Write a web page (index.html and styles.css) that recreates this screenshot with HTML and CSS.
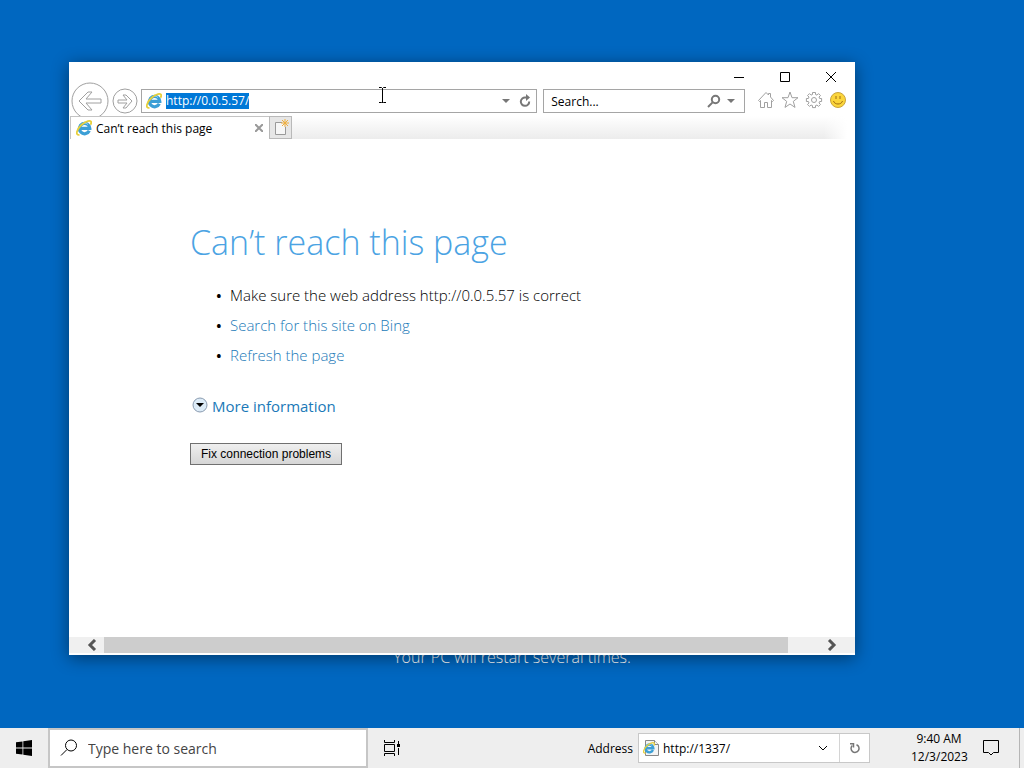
FILE: index.html
```html
<!DOCTYPE html>
<html lang="en">
<head>
    <meta charset="UTF-8">
    <meta name="viewport" content="width=device-width, initial-scale=1.0">
    <title>Can’t reach this page</title>
    <link rel="stylesheet" href="styles.css">
</head>
<body>
    <!-- shared Internet Explorer logo -->
    <svg class="defs" width="0" height="0">
        <symbol id="ie" viewBox="0 0 16 16">
            <path d="M13.300 10.800a5.200 5.200 0 1 1 .5-2.500H5" fill="none" stroke="#3c9fd6" stroke-width="3.200"/>
            <path d="M4.500 6a4.500 4.500 0 0 1 7.500-1.500" fill="none" stroke="#8fd3f4" stroke-width="1"/>
            <path d="M3.500 14.800C-1 15.500.5 9.500 5.300 5S15 0 15.200 2.200c.1.800-.2 1.600-.7 2.500" fill="none" stroke="#e6cf3c" stroke-width="1.800"/>
        </symbol>
    </svg>

    <main class="desktop">
        <p class="setup-text">Your PC will restart several times.</p>

        <section class="window">
            <div class="titlebar">
                <button aria-label="Minimize"><svg width="12" height="12"><path d="M1 6.500h10"/></svg></button>
                <button aria-label="Maximize"><svg width="12" height="12"><path d="M1.500 1.500h9v9h-9z"/></svg></button>
                <button aria-label="Close"><svg width="12" height="12"><path d="M1 1l10 10M11 1L1 11"/></svg></button>
            </div>

            <div class="navbar">
                <button class="back" aria-label="Back">
                    <svg width="38" height="38"><circle cx="19" cy="19" r="18"/><path d="M8 19l9-9h4l-6 7h15v4H15l6 7h-4z"/></svg>
                </button>
                <button class="forward" aria-label="Forward">
                    <svg width="26" height="26"><circle cx="13" cy="13" r="12"/><path d="M20 13l-6-6h-3l4 5H6v3h9l-4 5h3z"/></svg>
                </button>
                <div class="field address">
                    <svg class="ie" width="16" height="16"><use href="#ie"/></svg>
                    <input type="text" id="url" value="http://0.0.5.57/" aria-label="Address" spellcheck="false">
                    <button aria-label="Show addresses"><svg width="8" height="5"><path class="solid" d="M0 0h8L4 4z"/></svg></button>
                    <button aria-label="Refresh">
                        <svg width="14" height="14"><path class="thick" d="M11.200 7.500A4.200 4.200 0 1 1 7.500 3.500H9"/><path class="solid" d="M8 0l4 3.500L8 7z"/></svg>
                    </button>
                </div>
                <div class="field search">
                    <input type="text" placeholder="Search..." aria-label="Search">
                    <button aria-label="Search">
                        <svg width="14" height="14"><circle class="thick" cx="8.500" cy="5.500" r="3.700"/><path class="thick" d="M5.600 8.400L1 13"/></svg>
                    </button>
                    <button aria-label="Search options"><svg width="8" height="5"><path class="solid" d="M0 0h8L4 4z"/></svg></button>
                </div>
                <div class="tools">
                    <button aria-label="Home">
                        <svg width="18" height="18"><path d="M1.500 9.500L9 1.500l2.500 2.500V2.500h2V6l3 3.500-1 1-1-1v7h-4v-5h-3v5h-4v-7l-1 1z"/></svg>
                    </button>
                    <button aria-label="Favorites">
                        <svg width="18" height="18"><path d="M9 1l2 5.700h6l-4.700 3.700 1.700 6L9 13l-5 3.400 1.700-6L1 6.700h6z"/></svg>
                    </button>
                    <button aria-label="Tools">
                        <svg width="18" height="18"><path d="M7.500 3.500v-2h3v2l1.500.6L13.500 2.600l2 2L14 6l.6 1.500h2v3h-2L14 12l1.500 1.400-2 2L12 14l-1.500.6v2h-3v-2L6 14l-1.500 1.400-2-2L4 12l-.6-1.500h-2v-3h2L4 6 2.500 4.600l2-2L6 4.100z"/><circle cx="9" cy="9" r="2.500"/></svg>
                    </button>
                    <button aria-label="Send a smile">
                        <svg width="18" height="18"><circle class="face" cx="9" cy="9" r="7.500"/><path class="smile" d="M7 5v3M11 5v3M4.500 10c1 4 8 4 9 0"/></svg>
                    </button>
                </div>
            </div>

            <div class="tabs">
                <div class="tab">
                    <svg class="ie" width="16" height="16"><use href="#ie"/></svg>
                    <span>Can’t reach this page</span>
                    <button aria-label="Close tab"><svg width="8" height="8"><path d="M0 0l8 8M8 0L0 8"/></svg></button>
                </div>
                <button class="new-tab" aria-label="New tab">
                    <svg width="18" height="18"><path class="sheet" d="M10 3.500H3.500v12h10V8"/><path class="spark" d="M13 0v8M9 4h8M10 1l6 6M16 1l-6 6"/></svg>
                </button>
            </div>

            <article class="page">
                <h1>Can’t reach this page</h1>
                <ul>
                    <li>Make sure the web address http://0.0.5.57 is correct</li>
                    <li><a href="#">Search for this site on Bing</a></li>
                    <li><a href="#">Refresh the page</a></li>
                </ul>
                <a class="more" href="#">
                    <svg width="16" height="16"><circle cx="8" cy="7" r="7"/><path d="M4 5h8L8 9z"/></svg>
                    More information
                </a>
                <button class="fix">Fix connection problems</button>
            </article>

            <div class="scrollbar">
                <button aria-label="Scroll left"><svg width="10" height="12"><path d="M8 1L3 6l5 5"/></svg></button>
                <div class="track"><div class="thumb"></div></div>
                <button aria-label="Scroll right"><svg width="10" height="12"><path d="M2 1l5 5-5 5"/></svg></button>
            </div>

            <svg class="cursor" width="9" height="17"><path d="M1 .5h2.500l1 1 1-1H8M4.500 1v15M1 15.500h2.500l1-1 1 1H8"/></svg>
        </section>
    </main>

    <footer class="taskbar">
        <button class="start" aria-label="Start">
            <svg width="16" height="16"><path d="M0 2.300L6.500 1.400V7.600H0zM7.300 1.300L16 0v7.600H7.300zM0 8.400h6.500v6.200L0 13.700zM7.300 8.400H16V16l-8.700-1.300z"/></svg>
        </button>
        <label class="task-search">
            <svg width="18" height="18"><circle cx="11" cy="6.500" r="5.500"/><path d="M7 10.500L1 16.500"/></svg>
            <input type="text" placeholder="Type here to search" aria-label="Type here to search">
        </label>
        <button class="task-view" aria-label="Task View">
            <svg width="18" height="16"><path d="M1.500 0v2.500h10V0M1.500 16v-2.500h10V16M1.500 4.500h10v7h-10zM15.500 1v3M15.500 8v7"/><path class="dot" d="M14 4h3v3h-3z"/></svg>
        </button>

        <label class="address-label" for="task-url">Address</label>
        <div class="task-address">
            <svg width="16" height="16"><path class="paper" d="M2.500.5h9l4 4v11h-13z"/><path class="paper" d="M11.500.5v4h4"/><use href="#ie" x="0" y="2" width="12" height="12"/></svg>
            <input type="text" id="task-url" value="http://1337/" spellcheck="false">
            <button aria-label="Show addresses"><svg width="10" height="6"><path d="M1 1l4 4 4-4"/></svg></button>
            <button class="go" aria-label="Refresh">
                <svg width="12" height="12"><path class="ring" d="M7.500 2.700a4 4 0 1 1-4.200.8"/><path class="ring" d="M1 1.800h3.500v3.700"/></svg>
            </button>
        </div>
        <div class="clock">
            <span>9:40 AM</span>
            <span>12/3/2023</span>
        </div>
        <button class="notifications" aria-label="Notifications">
            <svg width="18" height="18"><path d="M1.500 1.500h15v12h-5L9 16l-2.500-2.500h-5z"/></svg>
        </button>
    </footer>

    <script>
        document.getElementById("url").select();
    </script>
</body>
</html>
```

FILE: styles.css
```css
* {
    margin: 0;
    padding: 0;
    box-sizing: border-box;
}

body {
    font-family: "Open Sans", sans-serif;
    font-size: 12px;
    color: #000;
    background-color: #0067c0;
    display: flex;
    flex-direction: column;
    height: 100vh;
    overflow: hidden;
}

button {
    display: flex;
    align-items: center;
    justify-content: center;
    border: none;
    background: none;
}

input {
    flex: 1;
    min-width: 0;
    border: none;
    outline: none;
    background: none;
    font: inherit;
    color: inherit;
}

input::placeholder {
    color: inherit;
    opacity: 1;
}

input::selection {
    color: #fff;
    background-color: #0078d7;
}

svg {
    flex: none;
    fill: none;
    stroke: #000;
}

a {
    color: #1a79b8;
    text-decoration: none;
}

.defs {
    position: absolute;
}

.desktop {
    position: relative;
    flex: 1;
}

.setup-text {
    position: absolute;
    bottom: 60px;
    width: 100%;
    text-align: center;
    font-size: 16px;
    font-weight: 300;
    line-height: 22px;
    color: #fff;
}

/* browser window */
.window {
    position: absolute;
    top: 62px;
    right: 169px;
    bottom: 73px;
    left: 69px;
    display: flex;
    flex-direction: column;
    padding-bottom: 2px;
    background-color: #fff;
    box-shadow: 0 3px 16px rgba(0, 0, 0, 0.45);
}

.titlebar {
    display: flex;
    justify-content: flex-end;
    height: 27px;
    padding-right: 1px;
}

.titlebar button {
    width: 46px;
    height: 30px;
}

.navbar {
    display: flex;
    align-items: center;
    height: 24px;
    padding: 0 8px 0 2px;
}

.navbar svg {
    stroke: #a0a0a0;
}

.back {
    width: 38px;
    height: 38px;
}

.forward {
    width: 26px;
    height: 26px;
    margin: 0 3px;
}

.field {
    display: flex;
    align-items: center;
    gap: 8px;
    height: 24px;
    border: 1px solid #a5a5a5;
}

.field .solid {
    fill: #777;
    stroke: none;
}

.field .thick {
    stroke: #777;
    stroke-width: 2;
}

.address {
    flex: 1;
    padding: 0 4px;
}

.address input {
    line-height: 16px;
    margin-left: -4px;
}

.search {
    width: 26%;
    gap: 6px;
    margin-left: 6px;
    padding: 0 9px 0 7px;
}

.tools {
    display: flex;
    gap: 6px;
    height: 20px;
    margin-left: 12px;
    padding-bottom: 2px;
}

.tools .face {
    fill: #fbd53b;
    stroke: #c9a43c;
}

.tools .smile {
    stroke: #a06c10;
}

.tabs {
    display: flex;
    height: 23px;
    margin: 3px 8px 0 1px;
    background: linear-gradient(90deg, transparent 97%, #fff), linear-gradient(#fff, #ececec);
}

.tab {
    position: relative;
    display: flex;
    align-items: center;
    gap: 4px;
    width: 199px;
    padding: 0 6px 0 5px;
    border: solid #c4c4c4;
    border-width: 1px 0 0 1px;
    background-color: #fff;
}

.tab button {
    margin-left: auto;
}

.tab button svg {
    stroke: #999;
    stroke-width: 2;
}

.new-tab {
    width: 23px;
    border: 1px solid #b9b9b9;
    background-color: #e6e6e6;
}

.new-tab .sheet {
    fill: #f6f6f6;
    stroke: #999;
}

.new-tab .spark {
    stroke: #efae3c;
}

/* error page */
.page {
    flex: 1;
    padding: 78px 121px 0;
    overflow: hidden;
}

.page h1 {
    font-size: 34px;
    font-weight: 300;
    line-height: 50px;
    color: #4ba3e3;
}

.page ul {
    margin-top: 13px;
    padding-left: 40px;
    font-size: 15px;
    font-weight: 300;
    line-height: 30px;
    list-style: none;
}

.page li::before {
    content: "•";
    display: inline-block;
    width: 14px;
    margin-left: -14px;
    font-weight: 600;
}

.more {
    display: flex;
    align-items: center;
    gap: 4px;
    margin: 25px 0 26px 2px;
    font-size: 15px;
    line-height: 22px;
}

.more svg {
    overflow: visible;
    fill: #dcebf7;
    stroke: #8a9bb0;
}

.more path {
    fill: #000;
    stroke: none;
}

.fix {
    height: 22px;
    padding: 0 10px;
    border: 1px solid #707070;
    background: linear-gradient(#efefef, #d6d6d6);
    font-family: "Liberation Sans", sans-serif;
    font-size: 12px;
}

.scrollbar {
    display: flex;
    height: 16px;
    background-color: #f0f0f0;
}

.scrollbar button {
    width: 35px;
    padding-left: 10px;
}

.scrollbar button:last-child {
    width: 46px;
    padding: 0;
}

.scrollbar svg {
    stroke: #555;
    stroke-width: 3;
}

.track {
    flex: 1;
}

.thumb {
    width: 97%;
    height: 100%;
    background-color: #cdcdcd;
}

.cursor {
    position: absolute;
    top: 25px;
    left: 309px;
}

/* taskbar */
.taskbar {
    display: flex;
    align-items: center;
    height: 40px;
    background-color: #eee;
}

.start {
    width: 48px;
    height: 40px;
}

.start svg {
    fill: #000;
    stroke: none;
}

.task-search {
    display: flex;
    align-items: center;
    gap: 10px;
    width: 320px;
    height: 40px;
    padding: 0 10px;
    border: 2px solid #c6c6c6;
    background-color: #fff;
    font-size: 14px;
    color: #444;
}

.task-view {
    width: 48px;
    height: 40px;
}

.task-view .dot {
    fill: #000;
    stroke: none;
}

.address-label {
    margin-left: auto;
}

.task-address {
    display: flex;
    align-items: center;
    gap: 4px;
    width: 232px;
    height: 30px;
    margin-left: 5px;
    padding-left: 4px;
    border: 1px solid #c8c8c8;
    background-color: #fff;
}

.task-address .paper {
    fill: #f4f4f4;
    stroke: #888;
}

.task-address button {
    width: 24px;
    height: 28px;
}

.task-address .go {
    width: 30px;
    border-left: 1px solid #d4d4d4;
}

.task-address .ring {
    stroke: #777;
    stroke-width: 1.5;
}

.clock {
    display: flex;
    flex-direction: column;
    width: 56px;
    margin-left: 41px;
    line-height: 18px;
    text-align: center;
    white-space: nowrap;
}

.notifications {
    width: 53px;
    height: 40px;
    margin-right: 4px;
    padding-right: 4px;
    border-right: 1px solid #b5b5b5;
}
```
